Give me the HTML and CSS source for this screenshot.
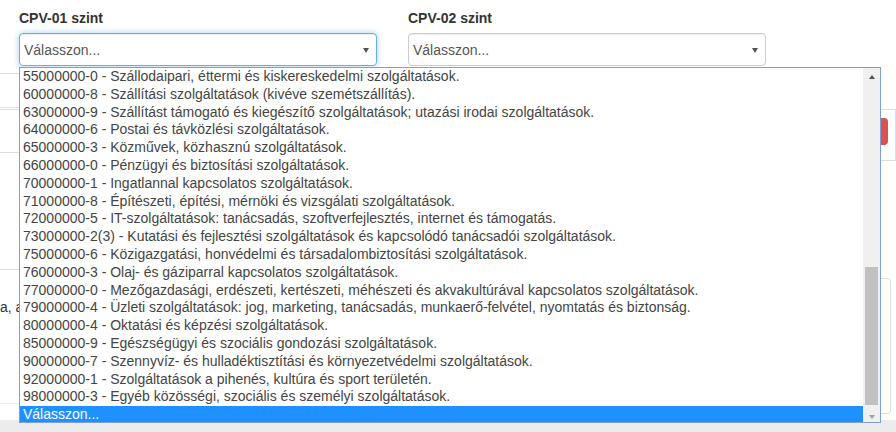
FILE: index.html
```html
<!DOCTYPE html>
<html lang="hu">
<head>
<meta charset="utf-8">
<title>CPV szint</title>
<link rel="stylesheet" href="styles.css">
</head>
<body>
<div class="page">
  <div class="form-row">
    <div class="field">
      <label class="label">CPV-01 szint</label>
      <div class="select focus">
        <span class="select-text">Válasszon...</span>
        <span class="caret"></span>
      </div>
    </div>
    <div class="field">
      <label class="label">CPV-02 szint</label>
      <div class="select">
        <span class="select-text">Válasszon...</span>
        <span class="caret"></span>
      </div>
    </div>
  </div>

  <div class="bg">
    <div class="bg-left">
      <div class="rule r1"></div>
      <div class="rule-double"></div>
      <div class="rule r3"></div>
      <div class="rule r4"></div>
      <p class="cut-text">a, a</p>
      <div class="rule r5"></div>
    </div>
    <div class="bg-right">
      <div class="box1"><span class="btn-danger"></span></div>
      <div class="box2"></div>
    </div>
  </div>
  <div class="band"></div>

  <div class="dropdown">
    <ul class="options">
      <li>55000000-0 - Szállodaipari, éttermi és kiskereskedelmi szolgáltatások.</li>
      <li>60000000-8 - Szállítási szolgáltatások (kivéve szemétszállítás).</li>
      <li>63000000-9 - Szállítást támogató és kiegészítő szolgáltatások; utazási irodai szolgáltatások.</li>
      <li>64000000-6 - Postai és távközlési szolgáltatások.</li>
      <li>65000000-3 - Közművek, közhasznú szolgáltatások.</li>
      <li>66000000-0 - Pénzügyi és biztosítási szolgáltatások.</li>
      <li>70000000-1 - Ingatlannal kapcsolatos szolgáltatások.</li>
      <li>71000000-8 - Építészeti, építési, mérnöki és vizsgálati szolgáltatások.</li>
      <li>72000000-5 - IT-szolgáltatások: tanácsadás, szoftverfejlesztés, internet és támogatás.</li>
      <li>73000000-2(3) - Kutatási és fejlesztési szolgáltatások és kapcsolódó tanácsadói szolgáltatások.</li>
      <li>75000000-6 - Közigazgatási, honvédelmi és társadalombiztosítási szolgáltatások.</li>
      <li>76000000-3 - Olaj- és gáziparral kapcsolatos szolgáltatások.</li>
      <li>77000000-0 - Mezőgazdasági, erdészeti, kertészeti, méhészeti és akvakultúrával kapcsolatos szolgáltatások.</li>
      <li>79000000-4 - Üzleti szolgáltatások: jog, marketing, tanácsadás, munkaerő-felvétel, nyomtatás és biztonság.</li>
      <li>80000000-4 - Oktatási és képzési szolgáltatások.</li>
      <li>85000000-9 - Egészségügyi és szociális gondozási szolgáltatások.</li>
      <li>90000000-7 - Szennyvíz- és hulladéktisztítási és környezetvédelmi szolgáltatások.</li>
      <li>92000000-1 - Szolgáltatások a pihenés, kultúra és sport területén.</li>
      <li>98000000-3 - Egyéb közösségi, szociális és személyi szolgáltatások.</li>
      <li class="selected">Válasszon...</li>
    </ul>
    <div class="scrollbar">
      <div class="sb-btn"><span class="arrow-up"></span></div>
      <div class="sb-track"><div class="sb-thumb"></div></div>
      <div class="sb-btn"><span class="arrow-down"></span></div>
    </div>
  </div>
</div>
</body>
</html>
```

FILE: styles.css
```css
html, body {
  margin: 0;
  padding: 0;
  background: #fff;
}
body {
  width: 896px;
  height: 432px;
  overflow: hidden;
  font-family: "Liberation Sans", Arial, sans-serif;
  font-size: 14px;
  color: #333;
}
.page {
  position: relative;
  height: 432px;
  padding-top: 8px;
  box-sizing: border-box;
}
.form-row {
  display: flex;
  gap: 31px;
  padding-left: 19px;
}
.field {
  width: 358px;
}
.label {
  display: block;
  font-weight: bold;
  line-height: 20px;
  margin-bottom: 5px;
  color: #333;
}
.select {
  height: 33px;
  box-sizing: border-box;
  border: 1px solid #ccc;
  border-radius: 4px;
  display: flex;
  align-items: center;
  justify-content: space-between;
  padding: 0 7px 0 4px;
  background: #fff;
  box-shadow: inset 0 1px 1px rgba(0,0,0,.075);
}
.select.focus {
  border-color: #66afe9;
  box-shadow: inset 0 1px 1px rgba(0,0,0,.075), 0 0 6px rgba(102,175,233,.6);
}
.select-text {
  color: #555;
  line-height: 20px;
}
.caret {
  width: 0;
  height: 0;
  border-left: 3.5px solid transparent;
  border-right: 3.5px solid transparent;
  border-top: 5px solid #555;
  margin-top: 1px;
}

/* background content hidden behind the open list */
.bg {
  display: flex;
  height: 354px;
}
.bg-left {
  width: 840px;
}
.bg-right {
  flex: 1;
}
.rule {
  border-top: 1px solid #ddd;
}
.r1 { margin-top: 7px; }
.rule-double {
  margin-top: 33px;
  height: 1px;
  border-top: 1px solid #e2e2e2;
  border-bottom: 1px solid #ddd;
}
.r3 { margin-top: 42px; }
.r4 { margin-top: 116px; }
.cut-text {
  margin: 27px 0 0 0;
  line-height: 20px;
  color: #333;
}
.r5 {
  margin-top: 86px;
  border-top-color: #eee;
}
.box1 {
  margin-top: 43px;
  height: 52px;
  box-sizing: border-box;
  border: 1px solid #ddd;
  display: flex;
  justify-content: flex-end;
  padding: 8px 7px 0 0;
}
.btn-danger {
  display: block;
  width: 40px;
  height: 27px;
  background: #d9534f;
  border-radius: 4px;
}
.box2 {
  margin-top: 117px;
  margin-right: 5px;
  height: 136px;
  box-sizing: border-box;
  border: 1px solid #ddd;
  border-radius: 4px;
}
.band {
  height: 12px;
  background: #ececec;
}

/* open dropdown list (overlay) */
.dropdown {
  position: absolute;
  left: 19px;
  top: 67px;
  width: 862px;
  height: 356px;
  box-sizing: border-box;
  border: 1px solid #7f9ed6;
  background: #fff;
  display: flex;
}
.options {
  list-style: none;
  margin: 0;
  padding: 0;
  flex: 1;
  overflow: hidden;
}
.options li {
  height: 17.8px;
  line-height: 17.8px;
  padding-left: 3px;
  color: #444;
  white-space: nowrap;
}
.options li.selected {
  background: #1e90ff;
  color: #fff;
}
.scrollbar {
  width: 17px;
  background: #f0f0f0;
  display: flex;
  flex-direction: column;
}
.sb-btn {
  height: 17px;
  display: flex;
  align-items: center;
  justify-content: center;
}
.arrow-up {
  width: 0;
  height: 0;
  border-left: 3.5px solid transparent;
  border-right: 3.5px solid transparent;
  border-bottom: 4px solid #505050;
  margin-top: 1px;
}
.arrow-down {
  width: 0;
  height: 0;
  border-left: 3.5px solid transparent;
  border-right: 3.5px solid transparent;
  border-top: 4px solid #a3a3a3;
  margin-top: 7px;
}
.sb-track {
  flex: 1;
}
.sb-thumb {
  margin: 182px 2px 0 2px;
  height: 138px;
  background: #c1c1c1;
}
```
